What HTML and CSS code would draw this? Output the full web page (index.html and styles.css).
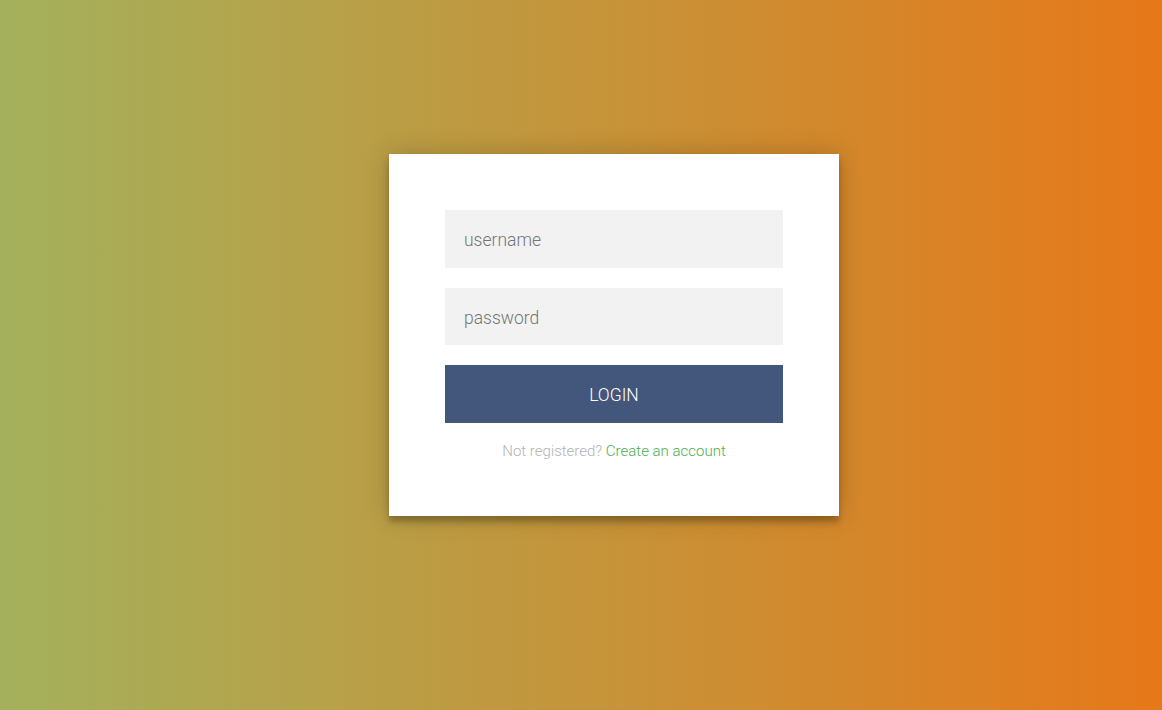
FILE: index.html
```html
<!DOCTYPE html>
<html lang="en">
<head>
<meta charset="utf-8">
<title>Login</title>
<link rel="stylesheet" href="styles.css">
</head>
<body>
<div class="login-page">
  <form class="form">
    <input class="field" type="text" placeholder="username">
    <input class="field" type="password" placeholder="password">
    <button class="btn" type="button">login</button>
    <p class="message">Not registered? <a href="#">Create an account</a></p>
  </form>
</div>
</body>
</html>
```
FILE: styles.css
```css
html, body {
  margin: 0;
  height: 100%;
}
body {
  background: linear-gradient(to right, #a4b15c, #e67819);
  font-family: Roboto, "Liberation Sans", sans-serif;
  font-weight: 300;
  overflow: hidden;
}
.login-page {
  display: flex;
  justify-content: center;
  padding: 154px 0 0 66px;
}
.form {
  box-sizing: border-box;
  width: 450px;
  background: #fff;
  padding: 56px 56px 56px;
  text-align: center;
  box-shadow: 0 0 25px 0 rgba(0,0,0,0.2), 0 6px 6px 0 rgba(0,0,0,0.24);
  margin: 0;
}
.field {
  display: block;
  box-sizing: border-box;
  width: 100%;
  height: 58px;
  margin: 0 0 20px;
  padding: 2px 19px 0;
  border: 0;
  outline: 0;
  background: #f2f2f2;
  font-family: Roboto, "Liberation Sans", sans-serif;
  font-weight: 300;
  font-size: 17.5px;
  color: #333;
}
.field + .field {
  height: 57px;
}
.field::placeholder {
  color: #757575;
}
.btn {
  display: block;
  width: 100%;
  height: 58px;
  padding: 2px 0 0;
  border: 0;
  outline: 0;
  background: #43567c;
  color: #fff;
  font-family: Roboto, "Liberation Sans", sans-serif;
  font-weight: 300;
  font-size: 17.5px;
  text-transform: uppercase;
  cursor: pointer;
}
.message {
  margin: 19px 0 0;
  color: #b3b3b3;
  font-size: 15px;
  line-height: 18px;
}
.message a {
  color: #4caf50;
  text-decoration: none;
}
```
